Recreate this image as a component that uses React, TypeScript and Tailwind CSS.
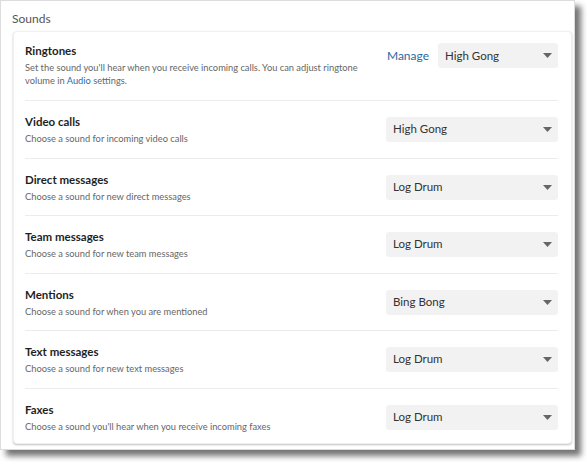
import React from 'react'

interface SoundRow {
  title: string
  desc: React.ReactNode
  value: string
  manage?: boolean
}

const rows: SoundRow[] = [
  {
    title: 'Ringtones',
    desc: (
      <>
        Set the sound you'll hear when you receive incoming calls. You can adjust ringtone
        <br />
        volume in <span className="text-[#2b6cb0]">Audio</span> settings.
      </>
    ),
    value: 'High Gong',
    manage: true,
  },
  { title: 'Video calls', desc: 'Choose a sound for incoming video calls', value: 'High Gong' },
  { title: 'Direct messages', desc: 'Choose a sound for new direct messages', value: 'Log Drum' },
  { title: 'Team messages', desc: 'Choose a sound for new team messages', value: 'Log Drum' },
  { title: 'Mentions', desc: 'Choose a sound for when you are mentioned', value: 'Bing Bong' },
  { title: 'Text messages', desc: 'Choose a sound for new text messages', value: 'Log Drum' },
  { title: 'Faxes', desc: "Choose a sound you'll hear when you receive incoming faxes", value: 'Log Drum' },
]

function Select({ value, wide }: { value: string; wide: boolean }) {
  return (
    <div
      className={`flex items-center justify-between h-[25px] rounded-[3px] bg-[#f2f2f2] pl-[7px] pr-[6px] ${
        wide ? 'w-[172px]' : 'w-[120px]'
      }`}
    >
      <span className="text-[11.5px] text-[#333]">{value}</span>
      <svg width="9" height="5" viewBox="0 0 9 5">
        <path d="M0 0 H9 L4.5 5 Z" fill="#666" />
      </svg>
    </div>
  )
}

export default function App() {
  return (
    <div className="w-[587px] h-[462px] bg-white font-['Lato','Open_Sans',sans-serif]">
      <div className="w-[575px] h-[450px] bg-white border border-[#dcdcdc] shadow-[6px_6px_6px_rgba(0,0,0,0.55)] pt-[10px] pl-[11px]">
        <div className="text-[12px] text-[#555] leading-[16px]">Sounds</div>
        <div className="mt-[4px] ml-[1px] w-[559px] bg-white rounded-[4px] border border-[#f0f0f0] shadow-[0_1px_2px_rgba(0,0,0,0.25)] pl-[11px] pr-[13px]">
          {rows.map((row, i) => (
            <div
              key={row.title}
              className={`flex items-center justify-between ${
                i === 0
                  ? 'pt-[10px] pb-[13px]'
                  : i === rows.length - 1
                  ? 'pt-[12px] pb-[10px]'
                  : i % 2 === 0
                  ? 'pt-[12px] pb-[12px]'
                  : 'pt-[12px] pb-[13px]'
              } ${i < rows.length - 1 ? 'border-b border-[#ececec]' : ''}`}
            >
              <div>
                <div className="text-[11.5px] font-bold text-[#1f1f1f] leading-[17px]">{row.title}</div>
                <div className="mt-[2px] text-[9.3px] text-[#666] leading-[13px]">{row.desc}</div>
              </div>
              <div className={`flex items-center gap-[9px] ${i === 0 ? 'self-start mt-[1px]' : ''}`}>
                {row.manage && <span className="text-[12px] text-[#2b6aa0]">Manage</span>}
                <Select value={row.value} wide={!row.manage} />
              </div>
            </div>
          ))}
        </div>
      </div>
    </div>
  )
}
